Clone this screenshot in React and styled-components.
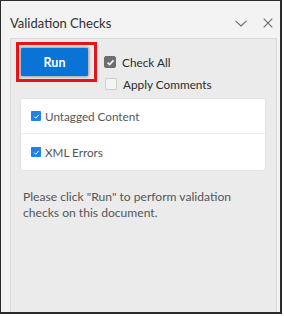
import React from 'react';
import styled, { createGlobalStyle } from 'styled-components';

const GlobalStyle = createGlobalStyle`
  html, body {
    margin: 0;
    padding: 0;
    background: #ffffff;
  }
  * {
    box-sizing: border-box;
  }
`;

const Frame = styled.div`
  width: 282px;
  height: 314px;
  display: flex;
  flex-direction: column;
  background: #f3f3f3;
  border-style: solid;
  border-color: #2b2b2b;
  border-width: 1px 2px 2px 1px;
  font-family: Lato, 'Noto Sans', sans-serif;
  overflow: hidden;
`;

const Header = styled.div`
  height: 37px;
  flex: none;
  display: flex;
  align-items: center;
  padding: 7px 7px 0 9px;
`;

const Title = styled.h1`
  margin: 0;
  flex: 1;
  font-size: 13px;
  font-weight: 400;
  color: #2f2f2f;
`;

const IconButton = styled.button`
  border: 0;
  background: none;
  padding: 0;
  margin-left: ${p => p.$gap || 0}px;
  display: flex;
  align-items: center;
  justify-content: center;
  color: #6a6a6a;
  svg {
    display: block;
  }
`;

const Panel = styled.div`
  flex: 1;
  margin: 0 3px 0 9px;
  border: 1px solid #d9d9d9;
  border-bottom: 0;
  background: #ebebeb;
  padding: 3px 5px 0 5px;
`;

const TopRow = styled.div`
  display: flex;
  align-items: flex-start;
`;

const Highlight = styled.div`
  border: 3px solid #e8141b;
  padding: 3px 6px 3px 2px;
`;

const RunButton = styled.button`
  width: 67px;
  height: 28px;
  border: 0;
  border-radius: 1px;
  background: #0a74d6;
  color: #ffffff;
  font-family: inherit;
  font-size: 12.5px;
  font-weight: 700;
  box-shadow: 0 0 3px 1px rgba(0, 0, 0, 0.35);
  display: block;
`;

const Options = styled.div`
  display: flex;
  flex-direction: column;
  margin: 9px 0 0 7px;
`;

const OptionRow = styled.label`
  height: 22px;
  display: flex;
  align-items: center;
  gap: 6px;
  padding-left: ${p => p.$indent || 0}px;
  font-size: 11.8px;
  color: #2c2c2c;
`;

const Box = styled.span`
  width: 12px;
  height: 12px;
  flex: none;
  border-radius: 2px;
  display: flex;
  align-items: center;
  justify-content: center;
  background: ${p => (p.$checked ? '#6d6d6d' : '#f4f4f4')};
  border: 1px solid ${p => (p.$checked ? '#6d6d6d' : '#cfcfcf')};
`;

const Card = styled.div`
  margin: 4px 0 0 5px;
  width: 244px;
  background: #ffffff;
  border-radius: 2px;
  box-shadow: 0 0 2px rgba(0, 0, 0, 0.12);
`;

const CardRow = styled.div`
  height: ${p => p.$h}px;
  display: flex;
  align-items: center;
  padding-left: 10px;
  gap: 4px;
  font-size: 11.7px;
  color: #555555;
  border-bottom: ${p => (p.$divider ? '1px solid #eeeeee' : '0')};
`;

const BlueBox = styled.span`
  width: 10px;
  height: 10px;
  flex: none;
  background: #1d83e6;
  border-radius: 1px;
  display: flex;
  align-items: center;
  justify-content: center;
`;

const Message = styled.p`
  margin: 19px 0 0 7px;
  width: 215px;
  font-size: 12.1px;
  line-height: 16px;
  color: #555555;
`;

const Check = ({ size = 8, stroke = 1.6 }) => (
  <svg width={size} height={size} viewBox="0 0 10 10">
    <path d="M1.8 5.2 L4 7.4 L8.3 2.6" fill="none" stroke="#fff" strokeWidth={stroke} />
  </svg>
);

const rules = [
  { label: 'Untagged Content', h: 35, divider: true },
  { label: 'XML Errors', h: 36 },
];

const App = () => (
  <>
    <GlobalStyle />
    <Frame>
      <Header>
        <Title>Validation Checks</Title>
        <IconButton aria-label="Collapse">
          <svg width="12" height="7" viewBox="0 0 12 7">
            <path d="M0.5 0.8 L6 6 L11.5 0.8" fill="none" stroke="currentColor" strokeWidth="1.1" />
          </svg>
        </IconButton>
        <IconButton aria-label="Close" $gap={16}>
          <svg width="10" height="10" viewBox="0 0 10 10">
            <path d="M0.7 0.7 L9.3 9.3 M9.3 0.7 L0.7 9.3" fill="none" stroke="currentColor" strokeWidth="1.1" />
          </svg>
        </IconButton>
      </Header>

      <Panel>
        <TopRow>
          <Highlight>
            <RunButton>Run</RunButton>
          </Highlight>
          <Options>
            <OptionRow>
              <Box $checked>
                <Check size={9} stroke={1.8} />
              </Box>
              Check All
            </OptionRow>
            <OptionRow $indent={1}>
              <Box />
              Apply Comments
            </OptionRow>
          </Options>
        </TopRow>

        <Card>
          {rules.map(rule => (
            <CardRow key={rule.label} $h={rule.h} $divider={rule.divider}>
              <BlueBox>
                <Check size={7} stroke={1.4} />
              </BlueBox>
              {rule.label}
            </CardRow>
          ))}
        </Card>

        <Message>Please click "Run" to perform validation checks on this document.</Message>
      </Panel>
    </Frame>
  </>
);

export default App;
